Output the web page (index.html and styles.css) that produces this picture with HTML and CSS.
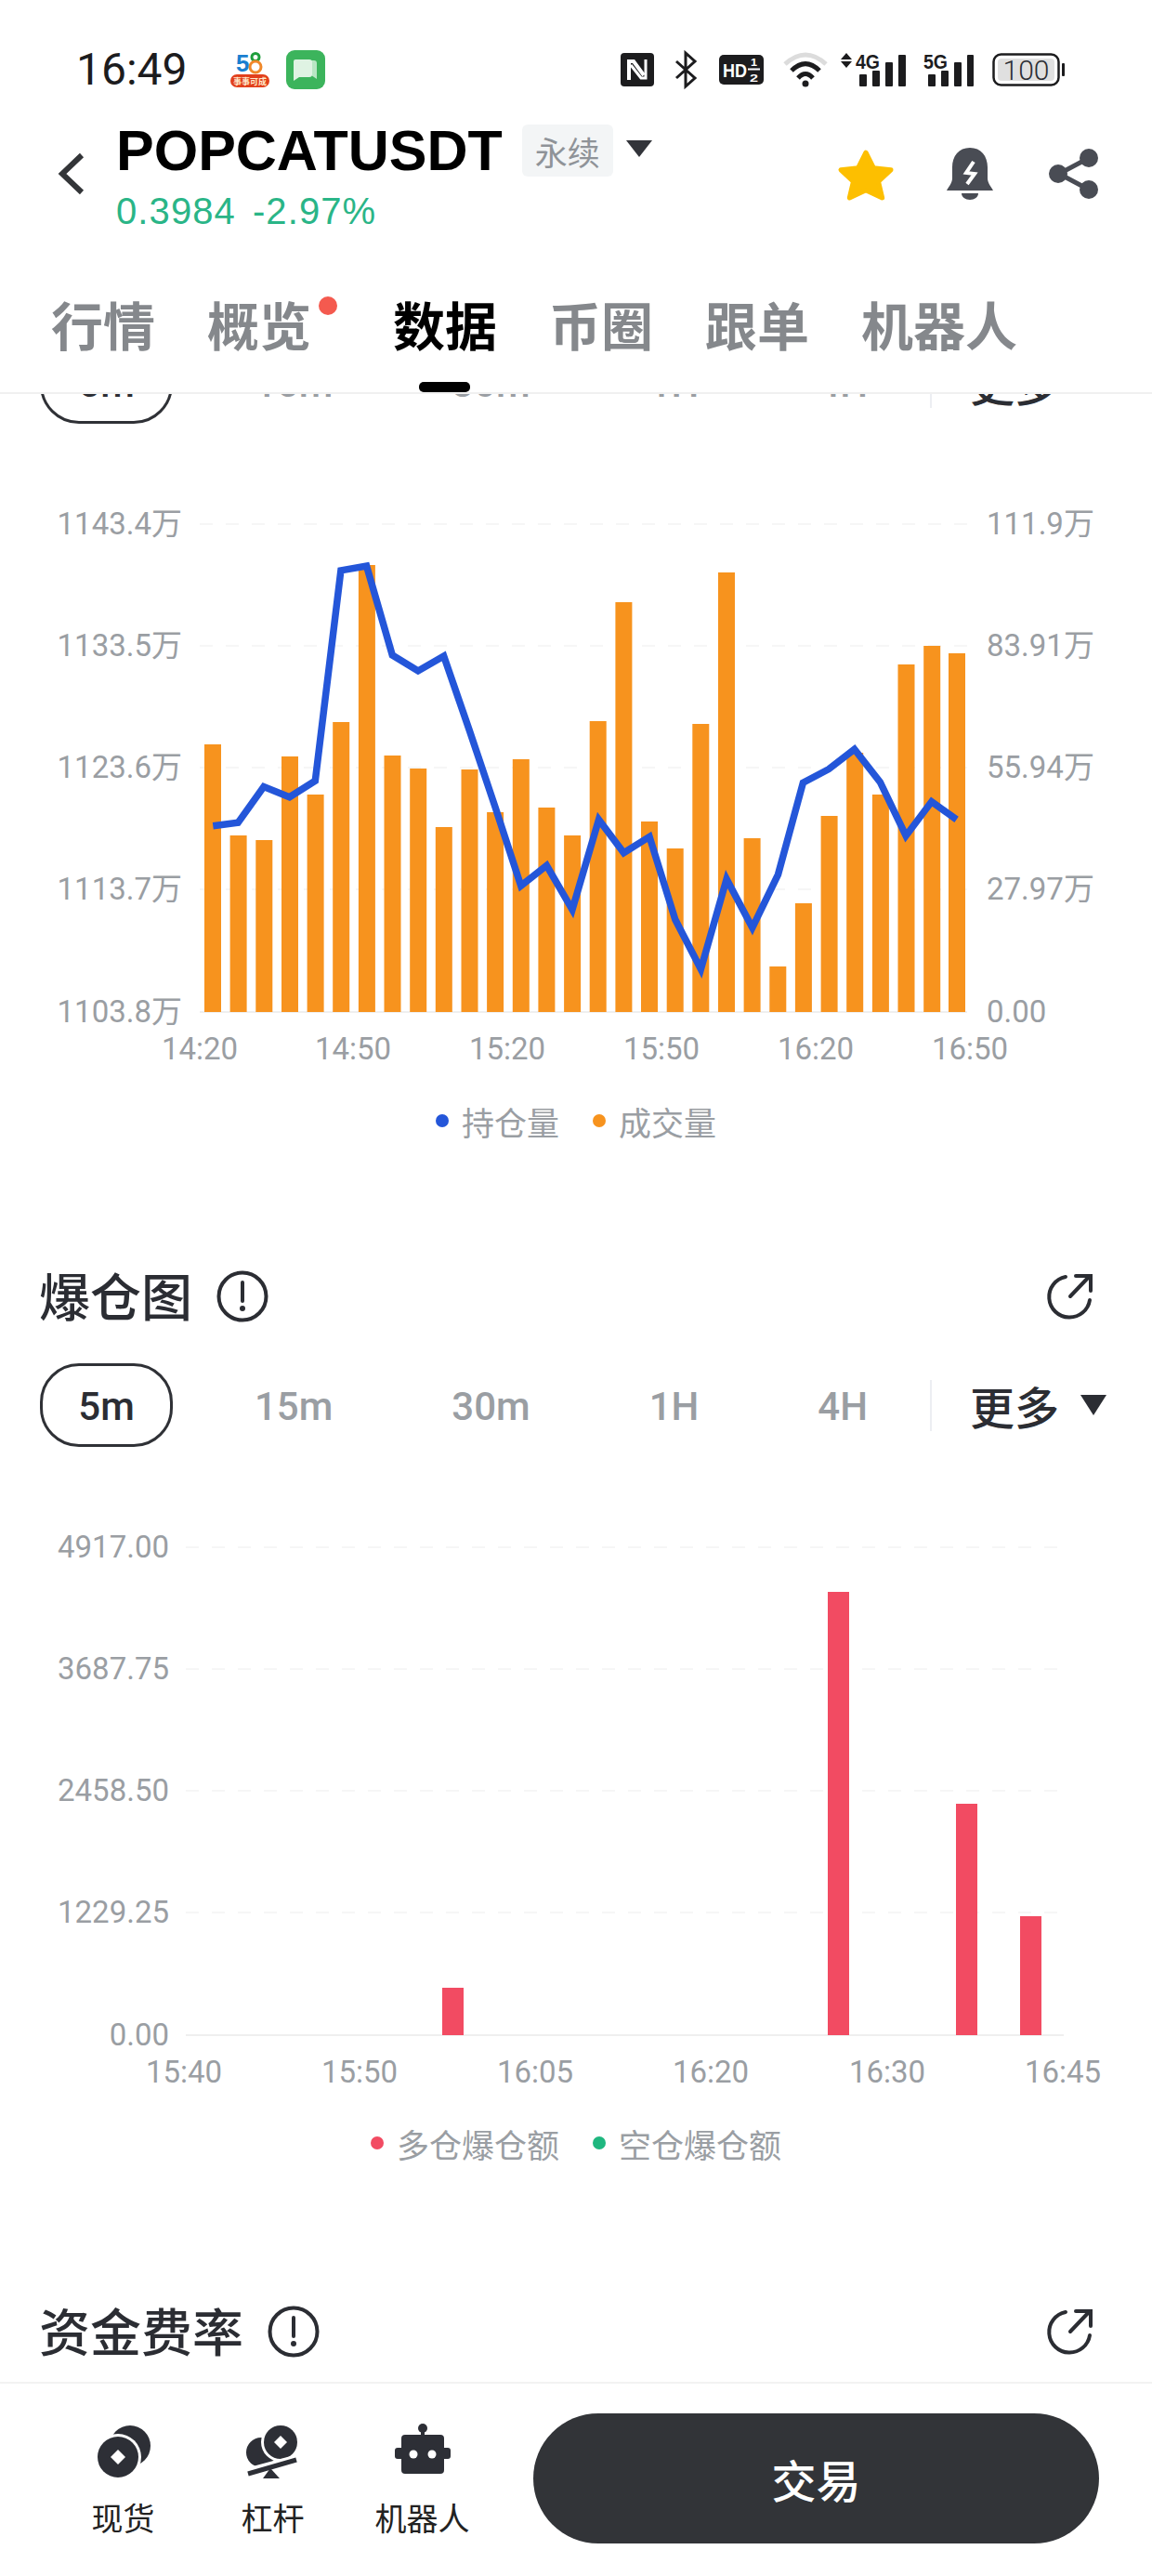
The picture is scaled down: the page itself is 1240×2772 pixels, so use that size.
FILE: index.html
```html
<!DOCTYPE html>
<html lang="zh-CN">
  <head>
    <meta charset="UTF-8" />
    <meta name="viewport" content="width=device-width, initial-scale=1.0" />
    <title>POPCATUSDT 数据</title>
    <link rel="stylesheet" href="styles.css">
  </head>
  <body>
    <div class="page">
      <header class="top">
        <div class="status">
          <div class="status-left">
            <span class="time">16:49</span>
            <svg class="app-58" width="42" height="38" viewBox="0 0 42 38">
              <text x="6" y="21" class="logo-five">5</text>
              <circle cx="27" cy="5.5" r="4" fill="none" stroke="#1f9e3c" stroke-width="3" />
              <circle cx="27" cy="16" r="6" fill="none" stroke="#f0882a" stroke-width="3" />
              <rect x="0" y="24" width="42" height="14" rx="7" fill="#e2401c" />
              <text x="21" y="35" class="logo-sub">事事可成</text>
            </svg>
            <svg width="42" height="42" viewBox="0 0 42 42">
              <rect width="42" height="42" rx="9" fill="#3cb45c" />
              <path d="M19 11h11a3 3 0 0 1 3 3v17l-6-4H19z" fill="#b9e6c4" />
              <path d="M10 10h15a3 3 0 0 1 3 3v13a3 3 0 0 1-3 3H14l-6 4V12a2 2 0 0 1 2-2z" fill="#dff3e3" />
            </svg>
          </div>
          <div class="status-right">
            <svg width="36" height="36" viewBox="0 0 36 36">
              <rect width="36" height="36" rx="4" fill="#1c1c1e" />
              <path d="M9 29V9h5l11 15" fill="none" stroke="#fff" stroke-width="4" />
              <path d="M27 7v20h-5L11 13" fill="none" stroke="#fff" stroke-width="3" />
            </svg>
            <svg class="st-bt" width="24" height="38" viewBox="0 0 24 38">
              <path d="M2 10l20 18-10 9V1l10 9L2 28" fill="none" stroke="#1c1c1e" stroke-width="3" />
            </svg>
            <svg class="st-hd" width="48" height="32" viewBox="0 0 48 32">
              <rect width="48" height="32" rx="5" fill="#1c1c1e" />
              <text x="4" y="24" class="hd-main" textLength="26" lengthAdjust="spacingAndGlyphs">HD</text>
              <text x="34" y="12" class="hd-small" textLength="7" lengthAdjust="spacingAndGlyphs">1</text>
              <rect x="31" y="14.5" width="13" height="2" fill="#fff" />
              <text x="33" y="29" class="hd-small" textLength="9" lengthAdjust="spacingAndGlyphs">2</text>
            </svg>
            <svg class="st-wifi" width="48" height="38" viewBox="0 0 48 38">
              <path d="M2 13Q24-7 46 13" fill="none" stroke="#dcdcdc" stroke-width="5" />
              <path d="M9 20Q24 5 39 20" fill="none" stroke="#1c1c1e" stroke-width="5" />
              <path d="M16 28Q24 19 32 28" fill="none" stroke="#1c1c1e" stroke-width="5" />
              <circle cx="24" cy="34" r="3.5" fill="#1c1c1e" />
            </svg>
            <svg class="st-4g" width="70" height="38" viewBox="0 0 70 38">
              <path d="M6 1l6 7H0zM6 17l6-7H0z" fill="#1c1c1e" />
              <text x="16" y="18" class="net" textLength="26" lengthAdjust="spacingAndGlyphs">4G</text>
              <rect x="20" y="24" width="8" height="13" rx="1" fill="#1c1c1e" />
              <rect x="34" y="20" width="8" height="17" rx="1" fill="#1c1c1e" />
              <rect x="48" y="11" width="8" height="26" rx="1" fill="#1c1c1e" />
              <rect x="62" y="3" width="8" height="34" rx="1" fill="#1c1c1e" />
            </svg>
            <svg class="st-5g" width="54" height="38" viewBox="0 0 54 38">
              <text x="0" y="18" class="net" textLength="26" lengthAdjust="spacingAndGlyphs">5G</text>
              <rect x="5" y="24" width="8" height="13" rx="1" fill="#1c1c1e" />
              <rect x="19" y="20" width="8" height="17" rx="1" fill="#1c1c1e" />
              <rect x="33" y="11" width="8" height="26" rx="1" fill="#1c1c1e" />
              <rect x="47" y="3" width="7" height="34" rx="1" fill="#1c1c1e" />
            </svg>
            <svg width="78" height="36" viewBox="0 0 78 36">
              <rect x="1.5" y="1.5" width="70" height="33" rx="8" fill="#fff" stroke="#1c1c1e" stroke-width="2.5" />
              <rect x="6" y="6" width="61" height="24" rx="4" fill="#e0e0e0" />
              <text x="36.5" y="29" class="batt">100</text>
              <rect x="75" y="11" width="3" height="14" rx="1" fill="#1c1c1e" />
            </svg>
          </div>
        </div>

        <div class="nav">
          <svg class="back" width="29" height="46" viewBox="0 0 29 46">
            <path d="M26 3L5 23l21 20" fill="none" stroke="#333538" stroke-width="6" />
          </svg>
          <div class="symbol">
            <div class="symbol-row">
              <h1 class="symbol-name">POPCATUSDT</h1>
              <span class="tag">永续</span>
              <span class="caret"></span>
            </div>
            <div class="price"><span>0.3984</span><span>-2.97%</span></div>
          </div>
          <div class="nav-actions">
            <svg class="star" width="60" height="58" viewBox="0 0 58 56">
              <path d="M29 5l8 16 18 2-13 12 4 17-17-8-17 8 4-17L3 23l18-2z" fill="#fdbf00" stroke="#fdbf00" stroke-width="5" stroke-linejoin="round" />
            </svg>
            <svg width="50" height="56" viewBox="0 0 50 56">
              <path d="M25 0C13 0 6 9 6 21v12c0 5-4 9-6 13h50c-2-4-6-8-6-13V21C44 9 37 0 25 0z" fill="#494c54" />
              <path d="M16 49h18c0 4-4 7-9 7s-9-3-9-7z" fill="#494c54" />
              <path d="M29 15l-8 12 9 1-8 11" fill="none" stroke="#fff" stroke-width="4" />
            </svg>
            <svg width="54" height="56" viewBox="0 0 54 56">
              <path d="M43 11L11 28l32 17" fill="none" stroke="#494c54" stroke-width="5" />
              <circle cx="43" cy="11" r="10" fill="#494c54" />
              <circle cx="10" cy="28" r="10" fill="#494c54" />
              <circle cx="43" cy="45" r="10" fill="#494c54" />
            </svg>
          </div>
        </div>

        <nav class="tabs">
          <span class="tab">行情</span>
          <span class="tab tab-dot">概览</span>
          <span class="tab tab-active">数据</span>
          <span class="tab">币圈</span>
          <span class="tab">跟单</span>
          <span class="tab">机器人</span>
        </nav>
      </header>

      <main class="content">
        <div class="periods periods-clipped">
          <span class="period period-active">5m</span>
          <span class="period">15m</span>
          <span class="period">30m</span>
          <span class="period">1H</span>
          <span class="period">4H</span>
          <span class="period-sep"></span>
          <span class="more">更多</span>
          <span class="more-caret"></span>
        </div>

        <svg class="chart chart-volume" width="1240" height="660" viewBox="0 500 1240 660">
          <g class="grid">
            <line x1="215" y1="564" x2="1041" y2="564" />
            <line x1="215" y1="695" x2="1041" y2="695" />
            <line x1="215" y1="826" x2="1041" y2="826" />
            <line x1="215" y1="957" x2="1041" y2="957" />
          </g>
          <line class="axis" x1="215" y1="1089" x2="1041" y2="1089" />
          <g class="bars-orange">
            <rect x="220" y="801" width="18" height="288" />
            <rect x="247.6" y="899" width="18" height="190" />
            <rect x="275.3" y="904" width="18" height="185" />
            <rect x="303" y="814" width="18" height="275" />
            <rect x="330.6" y="855" width="18" height="234" />
            <rect x="358.2" y="777" width="18" height="312" />
            <rect x="385.9" y="608" width="18" height="481" />
            <rect x="413.5" y="813" width="18" height="276" />
            <rect x="441.2" y="827" width="18" height="262" />
            <rect x="468.8" y="890" width="18" height="199" />
            <rect x="496.5" y="828" width="18" height="261" />
            <rect x="524.1" y="874" width="18" height="215" />
            <rect x="551.8" y="817" width="18" height="272" />
            <rect x="579.4" y="869" width="18" height="220" />
            <rect x="607.1" y="899" width="18" height="190" />
            <rect x="634.7" y="776" width="18" height="313" />
            <rect x="662.4" y="648" width="18" height="441" />
            <rect x="690" y="884" width="18" height="205" />
            <rect x="717.7" y="913" width="18" height="176" />
            <rect x="745.3" y="779" width="18" height="310" />
            <rect x="773" y="616" width="18" height="473" />
            <rect x="800.6" y="902" width="18" height="187" />
            <rect x="828.3" y="1040" width="18" height="49" />
            <rect x="855.9" y="972" width="18" height="117" />
            <rect x="883.6" y="878" width="18" height="211" />
            <rect x="911.2" y="810" width="18" height="279" />
            <rect x="938.9" y="855" width="18" height="234" />
            <rect x="966.5" y="715" width="18" height="374" />
            <rect x="994.2" y="695" width="18" height="394" />
            <rect x="1021" y="703" width="18" height="386" />
          </g>
          <polyline class="oi-line" points="229.3,888.7 256.2,885.3 283.9,846.6 311.6,857.7 339.3,840.3 366.9,613.9 394.6,609.1 422.3,705 450,722 477.7,706 505.3,786 533,868.4 560.7,953.2 588.4,931.4 616,978.9 644.5,881.9 671.4,917.8 699.1,900.4 726.8,989.5 754.4,1042.9 782.1,945.9 809.8,998.3 837.5,941.1 864.4,842.2 892,827.7 919.7,806.3 947.4,841.7 975.1,899.4 1002.8,862.6 1029.6,881.9" />
          <g class="labels labels-end">
            <text x="196" y="575">1143.4万</text>
            <text x="196" y="706">1133.5万</text>
            <text x="196" y="837">1123.6万</text>
            <text x="196" y="968">1113.7万</text>
            <text x="196" y="1100">1103.8万</text>
          </g>
          <g class="labels">
            <text x="1062" y="575">111.9万</text>
            <text x="1062" y="706">83.91万</text>
            <text x="1062" y="837">55.94万</text>
            <text x="1062" y="968">27.97万</text>
            <text x="1062" y="1100">0.00</text>
          </g>
          <g class="labels labels-mid">
            <text x="215" y="1140">14:20</text>
            <text x="380" y="1140">14:50</text>
            <text x="546" y="1140">15:20</text>
            <text x="712" y="1140">15:50</text>
            <text x="878" y="1140">16:20</text>
            <text x="1044" y="1140">16:50</text>
          </g>
        </svg>

        <div class="legend">
          <span class="legend-item"><i class="dot dot-blue"></i>持仓量</span>
          <span class="legend-item"><i class="dot dot-orange"></i>成交量</span>
        </div>

        <div class="section-head section-liq">
          <h2>爆仓图</h2>
          <svg class="info" width="56" height="56" viewBox="0 0 56 56">
            <circle cx="28" cy="28" r="25.5" fill="none" stroke="#2b2d33" stroke-width="4" />
            <path d="M28 13v20" stroke="#2b2d33" stroke-width="4" stroke-linecap="round" />
            <circle cx="28" cy="41" r="3" fill="#2b2d33" />
          </svg>
          <svg class="ext" width="50" height="50" viewBox="0 0 50 50">
            <path d="M20 4A22 22 0 1 0 46 29" fill="none" stroke="#2b2d33" stroke-width="4" stroke-linecap="round" />
            <path d="M25 25L46 3M31 3h16v16" fill="none" stroke="#2b2d33" stroke-width="4" stroke-linecap="round" />
          </svg>
        </div>

        <div class="periods">
          <span class="period period-active">5m</span>
          <span class="period">15m</span>
          <span class="period">30m</span>
          <span class="period">1H</span>
          <span class="period">4H</span>
          <span class="period-sep"></span>
          <span class="more">更多</span>
          <span class="more-caret"></span>
        </div>

        <svg class="chart chart-liq" width="1240" height="640" viewBox="0 1620 1240 640">
          <g class="grid">
            <line x1="200" y1="1665" x2="1145" y2="1665" />
            <line x1="200" y1="1796" x2="1145" y2="1796" />
            <line x1="200" y1="1927" x2="1145" y2="1927" />
            <line x1="200" y1="2058" x2="1145" y2="2058" />
          </g>
          <line class="axis" x1="200" y1="2190" x2="1145" y2="2190" />
          <g class="bars-red">
            <rect x="476" y="2139" width="23" height="51" />
            <rect x="891" y="1713" width="23" height="477" />
            <rect x="1029" y="1941" width="23" height="249" />
            <rect x="1098" y="2062" width="23" height="128" />
          </g>
          <g class="labels labels-end">
            <text x="182" y="1676">4917.00</text>
            <text x="182" y="1807">3687.75</text>
            <text x="182" y="1938">2458.50</text>
            <text x="182" y="2069">1229.25</text>
            <text x="182" y="2201">0.00</text>
          </g>
          <g class="labels labels-mid">
            <text x="198" y="2241">15:40</text>
            <text x="387" y="2241">15:50</text>
            <text x="576" y="2241">16:05</text>
            <text x="765" y="2241">16:20</text>
            <text x="955" y="2241">16:30</text>
            <text x="1144" y="2241">16:45</text>
          </g>
        </svg>

        <div class="legend">
          <span class="legend-item"><i class="dot dot-red"></i>多仓爆仓额</span>
          <span class="legend-item"><i class="dot dot-green"></i>空仓爆仓额</span>
        </div>

        <div class="section-head section-funding">
          <h2>资金费率</h2>
          <svg class="info" width="56" height="56" viewBox="0 0 56 56">
            <circle cx="28" cy="28" r="25.5" fill="none" stroke="#2b2d33" stroke-width="4" />
            <path d="M28 13v20" stroke="#2b2d33" stroke-width="4" stroke-linecap="round" />
            <circle cx="28" cy="41" r="3" fill="#2b2d33" />
          </svg>
          <svg class="ext" width="50" height="50" viewBox="0 0 50 50">
            <path d="M20 4A22 22 0 1 0 46 29" fill="none" stroke="#2b2d33" stroke-width="4" stroke-linecap="round" />
            <path d="M25 25L46 3M31 3h16v16" fill="none" stroke="#2b2d33" stroke-width="4" stroke-linecap="round" />
          </svg>
        </div>
      </main>

      <footer class="bottom">
        <div class="tool">
          <svg width="60" height="60" viewBox="0 0 60 60">
            <circle cx="37" cy="25" r="22" fill="#2d2f36" />
            <circle cx="24" cy="37" r="25" fill="#fff" />
            <circle cx="24" cy="37" r="22" fill="#2d2f36" />
            <path d="M24 29l8 8-8 8-8-8z" fill="#fff" />
          </svg>
          <span>现货</span>
        </div>
        <div class="tool">
          <svg width="60" height="60" viewBox="0 0 60 60">
            <circle cx="17" cy="32" r="16" fill="#2d2f36" />
            <circle cx="38" cy="21" r="21" fill="#fff" />
            <circle cx="38" cy="21" r="18" fill="#2d2f36" />
            <path d="M38 14l7 7-7 7-7-7z" fill="#fff" />
            <path d="M3 54L55 40" stroke="#fff" stroke-width="11" />
            <path d="M3 55L55 40" stroke="#2d2f36" stroke-width="5" />
            <path d="M27 49l10 11H19z" fill="#2d2f36" />
          </svg>
          <span>杠杆</span>
        </div>
        <div class="tool">
          <svg width="60" height="60" viewBox="0 0 60 60">
            <circle cx="30" cy="6" r="5" fill="#2d2f36" />
            <rect x="28" y="8" width="4" height="6" fill="#2d2f36" />
            <rect x="7" y="13" width="46" height="42" rx="4" fill="#2d2f36" />
            <rect x="0" y="27" width="60" height="12" rx="3" fill="#2d2f36" />
            <circle cx="20" cy="34" r="4.5" fill="#fff" />
            <circle cx="40" cy="34" r="4.5" fill="#fff" />
          </svg>
          <span>机器人</span>
        </div>
        <button class="trade">交易</button>
      </footer>
    </div>
  </body>
</html>
```

FILE: styles.css
```css
* {
  margin: 0;
  padding: 0;
  box-sizing: border-box;
}

body {
  width: 1240px;
  height: 2772px;
  overflow: hidden;
  background: #fff;
  font-family: Roboto, "Noto Sans CJK SC", sans-serif;
  color: #2b2d33;
}

.page {
  display: flex;
  flex-direction: column;
  height: 2772px;
}

svg {
  display: block;
  flex-shrink: 0;
  overflow: visible;
}

/* top block */
.top {
  position: relative;
  z-index: 2;
  height: 424px;
  padding-top: 54px;
  background: #fff;
  border-bottom: 2px solid #f0f0f0;
}

.status {
  display: flex;
  justify-content: space-between;
  align-items: center;
  height: 42px;
  padding: 0 94px 0 82px;
}

.status-left,
.status-right {
  display: flex;
  align-items: center;
}

.status-right {
  gap: 20px;
}

.st-bt { margin-left: 2px; }
.st-hd { margin-left: 4px; }
.st-wifi { margin-left: 1px; }
.st-4g { margin-left: -6px; }
.st-5g { margin-left: -1px; }

.time {
  width: 166px;
  font-size: 48px;
  line-height: 42px;
  color: #1c1c1e;
}

.app-58 {
  margin-right: 18px;
}

.logo-five {
  font: 700 26px "Liberation Sans", sans-serif;
  fill: #1a7fd0;
}

.logo-sub {
  font: 700 9px "Noto Sans CJK SC", sans-serif;
  fill: #ffe9c9;
  text-anchor: middle;
}

.hd-main {
  font: 700 20px "Liberation Sans", sans-serif;
  fill: #fff;
}

.hd-small {
  font: 700 11px "Liberation Sans", sans-serif;
  fill: #fff;
}

.net {
  font: 700 22px "Liberation Sans", sans-serif;
  fill: #1c1c1e;
}

.batt {
  font: 300 30px Roboto, sans-serif;
  fill: #2b2d33;
  text-anchor: middle;
}

.nav {
  display: flex;
  height: 118px;
  margin-top: 36px;
  padding: 0 57px 0 62px;
}

.back {
  margin-top: 32px;
  margin-right: 34px;
}

.symbol-row {
  display: flex;
  align-items: center;
  height: 60px;
}

.symbol-name {
  font: 700 61px/60px "Liberation Sans", sans-serif;
  color: #000;
}

.tag {
  display: flex;
  align-items: center;
  justify-content: center;
  width: 98px;
  height: 56px;
  margin-left: 21px;
  border-radius: 6px;
  background: #f3f5f6;
  color: #8f9398;
  font-size: 35px;
  font-weight: 400;
}

.caret {
  width: 0;
  height: 0;
  margin: -4px 0 0 14px;
  border-left: 14px solid transparent;
  border-right: 14px solid transparent;
  border-top: 18px solid #32343a;
}

.price {
  display: flex;
  gap: 18px;
  margin-top: 13px;
  font: 400 40px/44px "Liberation Sans", sans-serif;
  letter-spacing: 1.1px;
  color: #2ab587;
}

.nav-actions {
  display: flex;
  gap: 60px;
  margin: 27px 0 0 auto;
}

.star {
  margin-right: -3px;
}

.tabs {
  display: flex;
  gap: 56px;
  height: 97px;
  margin-top: 75px;
  padding-left: 55px;
}

.tab {
  position: relative;
  font-size: 56px;
  font-weight: 700;
  line-height: 56px;
  color: #85888c;
}

.tab-dot {
  margin-right: 32px;
}

.tab-dot::after {
  content: "";
  position: absolute;
  top: -6px;
  right: -28px;
  width: 20px;
  height: 20px;
  border-radius: 50%;
  background: #f45a4f;
}

.tab-active {
  color: #000;
}

.tab-active::after {
  content: "";
  position: absolute;
  left: 28px;
  top: 86px;
  width: 55px;
  height: 11px;
  border-radius: 5px;
  background: #000;
}

/* scrolled part */
.content {
  flex: 1;
  overflow: hidden;
}

.periods {
  display: flex;
  align-items: center;
  gap: 128px;
  height: 90px;
  padding-left: 43px;
  margin-top: 42px;
}

.periods-clipped {
  margin-top: -58px;
}

.period {
  padding-top: 2px;
  font-size: 42px;
  font-weight: 500;
  color: #9a9ea3;
}

.period-active {
  display: flex;
  align-items: center;
  justify-content: center;
  width: 143px;
  height: 90px;
  margin-right: -40px;
  border: 3px solid #2f3136;
  border-radius: 42px;
  color: #2b2d33;
}

.period-sep {
  width: 2px;
  height: 55px;
  margin-left: -61px;
  background: #eceef2;
}

.more {
  margin-left: -87px;
  font-size: 48px;
  font-weight: 500;
  color: #2b2d33;
}

.more-caret {
  width: 0;
  height: 0;
  margin-left: -105px;
  border-left: 14px solid transparent;
  border-right: 14px solid transparent;
  border-top: 22px solid #2b2d33;
}

.chart-volume {
  margin-top: 44px;
}

.chart-liq {
  margin-top: 63px;
}

.grid line {
  stroke: #f6f6f6;
  stroke-width: 2;
  stroke-dasharray: 14 14;
}

.axis {
  stroke: #efefef;
  stroke-width: 2;
}

.bars-orange rect {
  fill: #f7931e;
}

.bars-red rect {
  fill: #f24b62;
}

.oi-line {
  fill: none;
  stroke: #2456d9;
  stroke-width: 7.5;
}

.labels text {
  font-family: Roboto, "Noto Sans CJK SC", sans-serif;
  font-size: 33px;
  fill: #9a9ea3;
}

.labels-end text {
  text-anchor: end;
}

.labels-mid text {
  text-anchor: middle;
}

.legend {
  display: flex;
  justify-content: center;
  gap: 36px;
  height: 40px;
  margin-top: 26px;
}

.legend-item {
  display: flex;
  align-items: center;
  gap: 14px;
  font-size: 35px;
  color: #9a9ea3;
}

.dot {
  width: 14px;
  height: 14px;
  border-radius: 50%;
}

.dot-blue { background: #2456d9; }
.dot-orange { background: #f7931e; }
.dot-red { background: #f24b62; }
.dot-green { background: #1fb77f; }

.section-head {
  display: flex;
  align-items: center;
  height: 60px;
  padding: 0 63px 0 42px;
}

.section-head h2 {
  margin-top: 4px;
  font-size: 55px;
  font-weight: 500;
  line-height: 60px;
  color: #2b2d33;
}

.section-liq {
  margin-top: 139px;
}

.section-funding {
  margin-top: 153px;
}

.info {
  margin-left: 26px;
}

.ext {
  margin-left: auto;
}

/* bottom bar */
.bottom {
  display: flex;
  height: 209px;
  padding: 0 57px 0 52px;
  border-top: 2px solid #f2f2f2;
}

.tool {
  display: flex;
  flex-direction: column;
  align-items: center;
  width: 161px;
  padding-top: 42px;
  font-size: 34px;
  color: #222;
}

.tool span {
  margin-top: 22px;
  line-height: 44px;
}

.trade {
  width: 609px;
  height: 140px;
  margin: 32px 0 0 auto;
  border: none;
  border-radius: 70px;
  background: #323438;
  color: #fff;
  font-family: "Noto Sans CJK SC", sans-serif;
  font-size: 48px;
  font-weight: 500;
}
```
